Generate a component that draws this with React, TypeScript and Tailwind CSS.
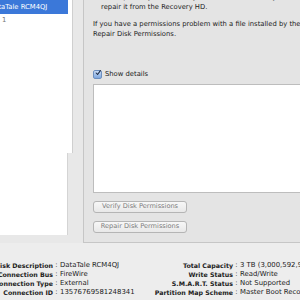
import React from "react";

const font = { fontFamily: '"DejaVu Sans", "Noto Sans", sans-serif' };

const leftRows = [
  ["Disk Description", "DataTale RCM4QJ"],
  ["Connection Bus", "FireWire"],
  ["Connection Type", "External"],
  ["Connection ID", "13576769581248341"],
];

const rightRows = [
  ["Total Capacity", "3 TB (3,000,592,982,016 Bytes)"],
  ["Write Status", "Read/Write"],
  ["S.M.A.R.T. Status", "Not Supported"],
  ["Partition Map Scheme", "Master Boot Record"],
];

function InfoBlock({ rows, labelW }: { rows: string[][]; labelW: string }) {
  return (
    <div className="flex shrink-0">
      <div className={`flex flex-col items-end ${labelW}`}>
        {rows.map(([l]) => (
          <div key={l} className="h-[9px] leading-[9px] whitespace-nowrap font-bold text-[6.3px] text-[#222]">
            {l}
          </div>
        ))}
      </div>
      <div className="flex flex-col items-center w-[7px]">
        {rows.map(([l]) => (
          <div key={l} className="h-[9px] leading-[9px] text-[6.8px] text-[#222]">
            :
          </div>
        ))}
      </div>
      <div className="flex flex-col">
        {rows.map(([l, v]) => (
          <div key={l} className="h-[9px] leading-[9px] whitespace-nowrap text-[6.9px] text-[#222]">
            {v}
          </div>
        ))}
      </div>
    </div>
  );
}

function MacButton({ label }: { label: string }) {
  return (
    <div className="w-[94px] h-[12px] rounded-[3px] border border-[#b5b5b5] bg-gradient-to-b from-[#f7f7f7] to-[#e8e8e8] flex items-center justify-center text-[6.6px] text-[#7d7d7d] whitespace-nowrap">
      {label}
    </div>
  );
}

export default function App() {
  return (
    <div className="w-[300px] h-[300px] overflow-hidden bg-[#e8e8e8] flex flex-col" style={font}>
      <div className="flex h-[243px] shrink-0">
        {/* sidebar */}
        <div className="w-[73px] shrink-0 flex flex-col">
          <div className="h-[153px] bg-white border-r border-[#cfcfcf] overflow-hidden">
            <div className="h-[14px] w-[68px] bg-[#3b78d9] flex items-center overflow-hidden">
              <span className="ml-[-11px] whitespace-nowrap text-[6.8px] text-white">DataTale RCM4QJ</span>
            </div>
            <div className="h-[12px] flex items-center pl-[2px] text-[6.8px] text-[#777]">1</div>
          </div>
          <div className="h-[82px] w-[68px] bg-white border-r border-[#d4d4d4]" />
        </div>
        <div className="w-[10px] shrink-0" />
        {/* first aid panel */}
        <div className="flex-1 min-w-0 border-l border-b border-[#c6c6c6] bg-[#e4e4e4] pl-[9px] overflow-hidden">
          <div className="mt-[-8px] text-[6.8px] leading-[10px] text-[#222] whitespace-nowrap">
            <div className="pl-[8px]">start up from your Recovery HD, choose Disk Utility, and then</div>
            <div className="pl-[8px]">repair it from the Recovery HD.</div>
            <div className="mt-[7px]">If you have a permissions problem with a file installed by the</div>
            <div>Repair Disk Permissions.</div>
          </div>
          <div className="mt-[29px] h-[12px] flex items-center gap-[3px]">
            <div className="w-[9px] h-[9px] rounded-[2px] border border-[#6d8fbf] bg-gradient-to-b from-[#c9dcf5] to-[#7ea7df] flex items-center justify-center">
              <svg viewBox="0 0 10 10" className="w-[10px] h-[10px] -mt-[2px] ml-[1px]">
                <path d="M2 5 L4.3 7.5 L9 1" fill="none" stroke="#1d2b45" strokeWidth="1.8" strokeLinecap="round" strokeLinejoin="round" />
              </svg>
            </div>
            <span className="text-[6.8px] text-[#222]">Show details</span>
          </div>
          <div className="mt-[4px] h-[109px] bg-white border border-[#bdbdbd] border-r-0" />
          <div className="mt-[8px] flex flex-col gap-[8px]">
            <MacButton label="Verify Disk Permissions" />
            <MacButton label="Repair Disk Permissions" />
          </div>
        </div>
      </div>
      {/* info */}
      <div className="flex-1 bg-[#ededed] pt-[18px] flex">
        <div className="w-[150px] shrink-0">
          <InfoBlock rows={leftRows} labelW="w-[53px]" />
        </div>
        <InfoBlock rows={rightRows} labelW="w-[83px]" />
      </div>
    </div>
  );
}
